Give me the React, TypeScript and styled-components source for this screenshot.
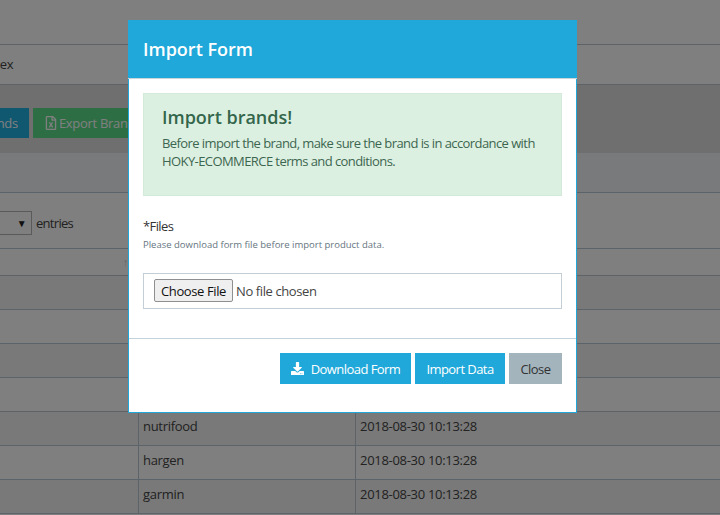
import React from "react";
import styled, { createGlobalStyle } from "styled-components";
import { FaDownload, FaRegFileExcel } from "react-icons/fa";

const GlobalStyle = createGlobalStyle`
  html, body {
    margin: 0;
    padding: 0;
    height: 515px;
    overflow: hidden;
    background: #fff;
    font-family: "Open Sans", "Noto Sans", sans-serif;
    font-size: 13px;
    letter-spacing: -0.3px;
    color: #444;
  }
`;

const Page = styled.div`
  width: 720px;
  height: 515px;
  overflow: hidden;
`;

const TopBar = styled.div`
  height: 44px;
  border-bottom: 1px solid #b8c8d2;
  box-sizing: content-box;
`;

const Crumb = styled.div`
  height: 39px;
  line-height: 39px;
  margin-left: -19px;
  border-bottom: 1px solid #b8c8d2;
`;

const Toolbar = styled.div`
  height: 68px;
  box-sizing: border-box;
  padding-top: 23px;
  margin-left: -77px;
  background: #dedede;
  display: flex;
  gap: 4px;
  align-items: flex-start;
`;

const ActionButton = styled.div<{ $bg: string }>`
  height: 30px;
  padding: 0 11px;
  display: flex;
  align-items: center;
  gap: 1px;
  white-space: nowrap;
  color: #fff;
  background: ${(p) => p.$bg};
`;

const SectionHead = styled.div`
  height: 39px;
  background: #f0f4f6;
  border-bottom: 1px solid #b8c8d2;
`;

const LengthBar = styled.div`
  height: 56px;
  display: flex;
  align-items: center;
  gap: 4px;
  margin-left: -39px;
  border-bottom: 1px solid #b8c8d2;
  padding-top: 4px;
  box-sizing: border-box;
  letter-spacing: -0.7px;
`;

const FakeSelect = styled.div`
  width: 71px;
  height: 24px;
  box-sizing: border-box;
  border: 1px solid #b5b5b5;
  display: flex;
  align-items: center;
  justify-content: flex-end;
  padding-right: 5px;
  font-size: 10px;
  color: #222;
`;

const Row = styled.div<{ $striped?: boolean; $head?: boolean }>`
  height: ${(p) => (p.$head ? 26 : 33)}px;
  display: grid;
  grid-template-columns: 138px 217px 1fr;
  line-height: ${(p) => (p.$head ? 26 : 29)}px;
  background: ${(p) => (p.$striped ? "#f2f2f2" : "#fff")};
  border-bottom: 1px solid #b8c8d2;
`;

const Cell = styled.div<{ $ruled?: boolean }>`
  padding-left: 4px;
  border-left: ${(p) => (p.$ruled ? "1px solid #b8c8d2" : "0")};
`;

const SortCell = styled.div`
  text-align: right;
  padding-right: 10px;
  color: #ccc;
  font-size: 11px;
`;

const Backdrop = styled.div`
  position: fixed;
  inset: 0;
  background: rgba(0, 0, 0, 0.5);
  padding: 20px 0 0 128px;
`;

const Modal = styled.div`
  width: 449px;
  height: 393px;
  box-sizing: border-box;
  background: #fff;
  border: 1px solid #1fa8d9;
  border-top: 0;
`;

const ModalHeader = styled.div`
  height: 58px;
  margin: 0 -1px;
  background: #1fa8d9;
  color: #fff;
  font-size: 18px;
  font-weight: 600;
  letter-spacing: 0;
  line-height: 58px;
  padding-left: 15px;
  border-bottom: 1px solid #c8d4da;
  box-sizing: content-box;
`;

const ModalBody = styled.div`
  height: 260px;
  box-sizing: border-box;
  padding: 14px 14px 0;
  border-bottom: 1px solid #c3d2db;
`;

const Alert = styled.div`
  height: 103px;
  box-sizing: border-box;
  background: #dcf0e2;
  border: 1px solid #d3e9da;
  padding: 10px 18px;
  color: #3c6650;
`;

const AlertTitle = styled.div`
  font-size: 18px;
  font-weight: 600;
  letter-spacing: 0;
  line-height: 26px;
  margin-bottom: 4px;
  color: #33664a;
`;

const AlertText = styled.div`
  font-size: 13px;
  letter-spacing: -0.58px;
  line-height: 18px;
`;

const FieldLabel = styled.div`
  margin-top: 21px;
  font-size: 13px;
  letter-spacing: -0.6px;
  line-height: 18px;
  color: #333;
`;

const FieldHint = styled.div`
  margin-top: 4px;
  font-size: 9.5px;
  letter-spacing: 0;
  line-height: 12px;
  color: #66757f;
`;

const FileBox = styled.div`
  margin-top: 22px;
  height: 36px;
  box-sizing: border-box;
  border: 1px solid #c3ced6;
  padding: 5px 10px 6px;
  display: flex;
  align-items: center;
`;

const FileInput = styled.input`
  font-family: "Open Sans", sans-serif;
  font-size: 13px;
  letter-spacing: -0.4px;
  color: #444;
  &::file-selector-button {
    font: inherit;
    letter-spacing: -0.4px;
    color: #111;
    height: 23px;
    width: 79px;
    padding: 0;
    margin-right: 3px;
    background: #efefef;
    border: 1px solid #8f8f8f;
    border-radius: 2px;
  }
`;

const ModalFooter = styled.div`
  display: flex;
  justify-content: flex-end;
  gap: 4px;
  padding: 14px 14px 0;
`;

const FooterButton = styled.div<{ $muted?: boolean; $w: number }>`
  width: ${(p) => p.$w}px;
  height: 31px;
  display: flex;
  align-items: center;
  justify-content: center;
  gap: 7px;
  font-size: 13px;
  letter-spacing: -0.55px;
  background: ${(p) => (p.$muted ? "#a4b4bd" : "#1fa8d9")};
  color: ${(p) => (p.$muted ? "#333" : "#fff")};
`;

const rows = [
  { name: "", date: "", striped: true },
  { name: "", date: "", striped: false },
  { name: "", date: "", striped: true },
  { name: "", date: "", striped: false },
  { name: "nutrifood", date: "2018-08-30 10:13:28", striped: true },
  { name: "hargen", date: "2018-08-30 10:13:28", striped: false },
  { name: "garmin", date: "2018-08-30 10:13:28", striped: true },
];

export default function App() {
  return (
    <>
      <GlobalStyle />
      <Page>
        <TopBar />
        <Crumb>Index</Crumb>
        <Toolbar>
          <ActionButton $bg="#1fb0e0">Import Brands</ActionButton>
          <ActionButton $bg="#5cdc8a">
            <FaRegFileExcel size={14} />
            Export Brands
          </ActionButton>
        </Toolbar>
        <SectionHead />
        <LengthBar>
          <FakeSelect>▼</FakeSelect>
          entries
        </LengthBar>
        <Row $head>
          <SortCell>↑</SortCell>
        </Row>
        {rows.map((r, i) => (
          <Row key={i} $striped={r.striped}>
            <Cell />
            <Cell $ruled>{r.name}</Cell>
            <Cell $ruled>{r.date}</Cell>
          </Row>
        ))}
      </Page>
      <Backdrop>
        <Modal>
          <ModalHeader>Import Form</ModalHeader>
          <ModalBody>
            <Alert>
              <AlertTitle>Import brands!</AlertTitle>
              <AlertText>
                Before import the brand, make sure the brand is in accordance with HOKY-ECOMMERCE terms and conditions.
              </AlertText>
            </Alert>
            <FieldLabel>*Files</FieldLabel>
            <FieldHint>Please download form file before import product data.</FieldHint>
            <FileBox>
              <FileInput type="file" />
            </FileBox>
          </ModalBody>
          <ModalFooter>
            <FooterButton $w={131}>
              <FaDownload size={13} />
              Download Form
            </FooterButton>
            <FooterButton $w={90}>Import Data</FooterButton>
            <FooterButton $w={53} $muted>
              Close
            </FooterButton>
          </ModalFooter>
        </Modal>
      </Backdrop>
    </>
  );
}
